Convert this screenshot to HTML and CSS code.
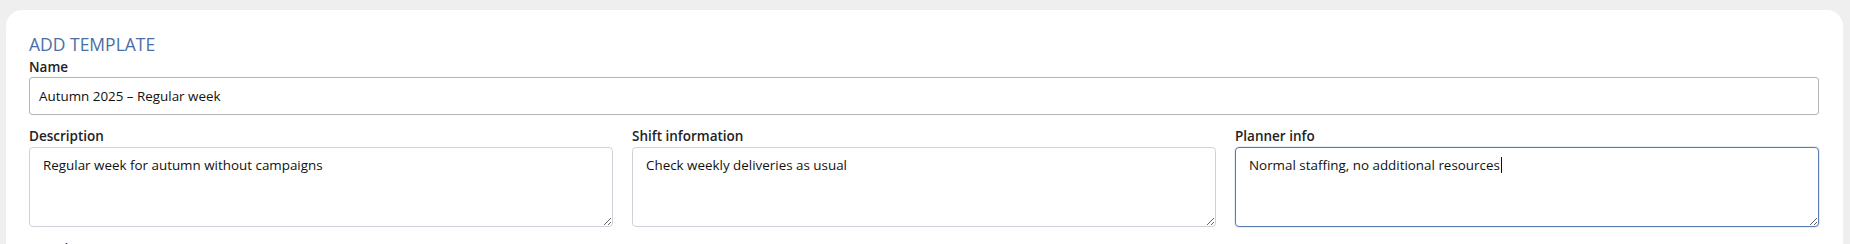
FILE: index.html
```html
<!DOCTYPE html>
<html lang="en">
<head>
    <meta charset="UTF-8">
    <meta name="viewport" content="width=device-width, initial-scale=1.0">
    <title>Add Template</title>
    <link rel="stylesheet" href="styles.css">
</head>
<body>
    <div class="card">
        <h2 class="card-title">ADD TEMPLATE</h2>

        <div class="field">
            <label for="name">Name</label>
            <input type="text" id="name" value="Autumn 2025 – Regular week">
        </div>

        <div class="row">
            <div class="field">
                <label for="description">Description</label>
                <textarea id="description">Regular week for autumn without campaigns</textarea>
            </div>
            <div class="field">
                <label for="shiftInfo">Shift information</label>
                <textarea id="shiftInfo">Check weekly deliveries as usual</textarea>
            </div>
            <div class="field">
                <label for="plannerInfo">Planner info</label>
                <div class="focus-wrap">
                    <textarea id="plannerInfo" class="focused">Normal staffing, no additional resources</textarea>
                    <span class="caret"></span>
                </div>
            </div>
        </div>

        <div class="field">
            <label for="location">Location</label>
        </div>
    </div>
</body>
</html>
```

FILE: styles.css
```css
html, body {
    height: 244px;
    overflow: hidden;
}

body {
    margin: 0;
    padding: 10px 7px 0 6px;
    box-sizing: border-box;
    background-color: #efefef;
    font-family: "Open Sans", "Noto Sans", Arial, sans-serif;
    color: #222;
}

.card {
    background-color: #fff;
    border-radius: 16px;
    padding: 22px 24px 0 23px;
    height: 260px;
}

.card-title {
    margin: 0 0 1px;
    font-size: 17.5px;
    font-weight: 500;
    line-height: 24px;
    color: #4a6ea6;
}

.field {
    display: flex;
    flex-direction: column;
}

label {
    font-size: 13.5px;
    font-weight: 600;
    line-height: 20px;
    color: #222;
}

input[type="text"] {
    height: 38px;
    box-sizing: border-box;
    border: 1px solid #b5b5b5;
    border-radius: 3px;
    padding: 0 9px;
    font-family: inherit;
    font-size: 13.4px;
    color: #111;
    margin-bottom: 11px;
}

.row {
    display: grid;
    grid-template-columns: repeat(3, 1fr);
    gap: 19px;
    margin-bottom: 12px;
}

textarea {
    height: 80px;
    box-sizing: border-box;
    border: 1px solid #cfd2d8;
    border-radius: 4px;
    padding: 8px 13px;
    font-family: inherit;
    font-size: 13.4px;
    color: #111;
    resize: vertical;
    margin-top: 1px;
    width: 100%;
    display: block;
}

.focus-wrap {
    position: relative;
}

textarea.focused {
    border-color: #5a7db6;
    box-shadow: 0 0 0 1px rgba(90, 125, 182, 0.15);
}

.caret {
    position: absolute;
    left: 266px;
    top: 11px;
    width: 1px;
    height: 16px;
    background-color: #111;
}
```
